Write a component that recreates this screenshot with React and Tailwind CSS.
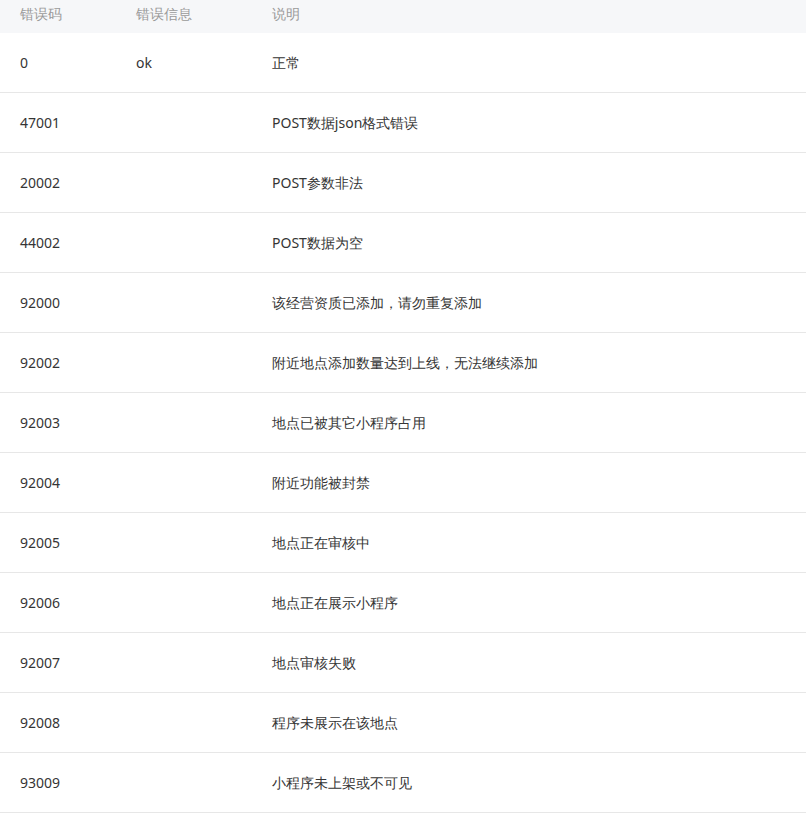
const rows = [
  ["0", "ok", "正常"],
  ["47001", "", "POST数据json格式错误"],
  ["20002", "", "POST参数非法"],
  ["44002", "", "POST数据为空"],
  ["92000", "", "该经营资质已添加，请勿重复添加"],
  ["92002", "", "附近地点添加数量达到上线，无法继续添加"],
  ["92003", "", "地点已被其它小程序占用"],
  ["92004", "", "附近功能被封禁"],
  ["92005", "", "地点正在审核中"],
  ["92006", "", "地点正在展示小程序"],
  ["92007", "", "地点审核失败"],
  ["92008", "", "程序未展示在该地点"],
  ["93009", "", "小程序未上架或不可见"],
];

export default function App() {
  return (
    <div className="w-[806px] bg-white text-[14px] font-['Helvetica','Liberation_Sans','Noto_Sans_CJK_SC',sans-serif]">
      <div className="flex h-[33px] items-start bg-[#f6f7f9] text-[#9a9a9a]">
        <div className="w-[136px] pl-5 leading-[28px]">错误码</div>
        <div className="w-[136px] leading-[28px]">错误信息</div>
        <div className="leading-[28px]">说明</div>
      </div>
      {rows.map((r, i) => (
        <div key={i} className="flex h-[60px] items-center border-b border-[#e7e7e7] text-[#353535]">
          <div className="w-[136px] pl-5 pb-[1px]">{r[0]}</div>
          <div className="w-[136px] pb-[1px]">{r[1]}</div>
          <div className="pb-[1px]">{r[2]}</div>
        </div>
      ))}
    </div>
  );
}
